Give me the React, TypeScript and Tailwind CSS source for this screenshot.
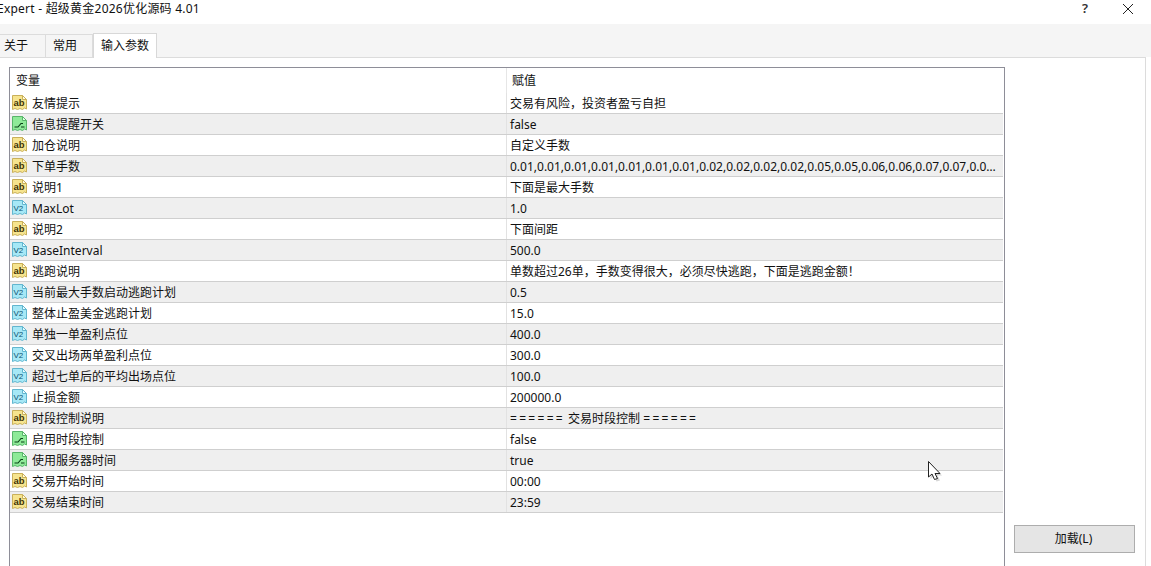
const rows: [string, string, string][] = [
  ["ab", "友情提示", "交易有风险，投资者盈亏自担"],
  ["bool", "信息提醒开关", "false"],
  ["ab", "加仓说明", "自定义手数"],
  ["ab", "下单手数", "0.01,0.01,0.01,0.01,0.01,0.01,0.01,0.02,0.02,0.02,0.02,0.05,0.05,0.06,0.06,0.07,0.07,0.08,0.08,0.09"],
  ["ab", "说明1", "下面是最大手数"],
  ["v", "MaxLot", "1.0"],
  ["ab", "说明2", "下面间距"],
  ["v", "BaseInterval", "500.0"],
  ["ab", "逃跑说明", "单数超过26单，手数变得很大，必须尽快逃跑，下面是逃跑金额！"],
  ["v", "当前最大手数启动逃跑计划", "0.5"],
  ["v", "整体止盈美金逃跑计划", "15.0"],
  ["v", "单独一单盈利点位", "400.0"],
  ["v", "交叉出场两单盈利点位", "300.0"],
  ["v", "超过七单后的平均出场点位", "100.0"],
  ["v", "止损金额", "200000.0"],
  ["ab", "时段控制说明", "====== 交易时段控制 ======"],
  ["bool", "启用时段控制", "false"],
  ["bool", "使用服务器时间", "true"],
  ["ab", "交易开始时间", "00:00"],
  ["ab", "交易结束时间", "23:59"],
];

function TypeIcon({ kind }: { kind: string }) {
  const c =
    kind === "ab"
      ? { fill: "#f6e48e", stroke: "#c9b05a", fold: "#fffbe0", text: "#3f3406" }
      : kind === "v"
        ? { fill: "#a6e8f6", stroke: "#62b6cf", fold: "#e8fcff", text: "#0e5270" }
        : { fill: "#8eea98", stroke: "#58b56a", fold: "#e2ffe5", text: "#083f16" };
  return (
    <svg width="16" height="16" viewBox="0 0 16 16" className="shrink-0">
      <path
        d="M0.500 0.500H10.500L14.500 4.500V14L12.500 13L10.500 14.500L8 13.500L5.500 14.500L3 13.500L0.500 14.500Z"
        fill={c.fill}
        stroke={c.stroke}
      />
      <path d="M10.500 0.500V4.500H14.500Z" fill={c.fold} stroke={c.stroke} />
      {kind === "bool" ? (
        <path d="M2.500 11H6L9 7.500H11M9 11H12.500" fill="none" stroke={c.text} strokeWidth="1.100" />
      ) : (
        <text
          x="1.500"
          y="10.500"
          fontSize={kind === "ab" ? 9.500 : 8}
          fontWeight={kind === "ab" ? 700 : 400}
          fontFamily="'Liberation Sans', sans-serif"
          fill={c.text}
        >
          {kind === "ab" ? "ab" : "V2"}
        </text>
      )}
    </svg>
  );
}

function Value({ text }: { text: string }) {
  if (!text.includes("=")) return <>{text}</>;
  const inner = text.replace(/=/g, "").trim();
  return (
    <>
      <span className="tracking-[2.300px]">======</span> {inner} <span className="tracking-[2.300px]">======</span>
    </>
  );
}

export default function App() {
  return (
    <div
      className="flex h-[566px] w-[1151px] flex-col overflow-hidden bg-white text-[12px] text-[#111]"
      style={{ fontFamily: "'Noto Sans', 'Noto Sans CJK SC', sans-serif" }}
    >
      <div className="flex h-[24px] shrink-0 items-start justify-between">
        <span className="ml-[-3px] mt-[1px] leading-[16px] tracking-[0.230px]">Expert - 超级黄金2026优化源码 4.01</span>
        <div className="flex items-center">
          <span className="mr-[34px] mt-[1px] text-[13px] font-semibold leading-[14px] text-[#333]">?</span>
          <svg width="12" height="12" viewBox="0 0 12 12" className="mr-[17px] mt-[2px]">
            <path d="M1 1L11 11M11 1L1 11" stroke="#222" strokeWidth="1" />
          </svg>
        </div>
      </div>
      <div className="flex h-[33px] shrink-0 items-end bg-[#f5f5f5]">
        <div className="flex h-[23px] w-[46px] items-center border-r border-t border-[#dcdcdc] pl-[4px]">关于</div>
        <div className="flex h-[23px] w-[47px] items-center border-r border-t border-[#dcdcdc] pl-[7px]">常用</div>
        <div className="z-10 mb-[-1px] flex h-[25px] w-[64px] items-center justify-center border-x border-t border-[#d8d8d8] bg-white">
          输入参数
        </div>
      </div>
      <div className="mr-[5px] flex min-h-0 flex-1 border-r border-t border-[#dcdcdc] pr-[10px]">
        <div className="ml-[9px] mt-[9px] flex w-[996px] shrink-0 flex-col border-l border-r border-t border-[#8e8e98] pr-[1px]">
          <div className="flex h-[25px] shrink-0">
            <div className="w-[497px] border-r border-[#e6e6e6] pl-[6px] pt-[5px] leading-[16px]">变量</div>
            <div className="flex-1 pl-[5px] pt-[5px] leading-[16px]">赋值</div>
          </div>
          {rows.map(([kind, name, value], i) => (
            <div
              key={name}
              className={`flex h-[21px] shrink-0 items-center border-b border-[#cfcfcf] ${
                i % 2 ? "bg-[#efefef]" : "bg-white"
              }`}
            >
              <div className="flex h-full w-[497px] shrink-0 items-center gap-[4px] border-r border-[#e2e2e2] pl-[2px]">
                <TypeIcon kind={kind} />
                <span className="mt-[1px] whitespace-nowrap">{name}</span>
              </div>
              <div className="mt-[1px] min-w-0 flex-1 truncate pl-[3px] pr-[5px]">
                <Value text={value} />
              </div>
            </div>
          ))}
        </div>
        <div className="flex flex-1 flex-col items-end justify-end pb-[13px]">
          <button className="flex h-[28px] w-[121px] items-center justify-center border border-[#adadad] bg-[#e5e5e5] pr-[2px]">
            加载(L)
          </button>
        </div>
      </div>
      <svg width="18" height="24" viewBox="0 0 18 24" className="absolute left-[927px] top-[460px]">
        <path d="M3.500 3.500V19L7 16L9.500 21.500L13 20.500L10.500 15.500H15Z" fill="#777" opacity="0.300" />
        <path d="M1.500 1.500V17L5 14L7.500 19.500L10.500 18.500L8 13.500H13Z" fill="#fff" stroke="#222" />
      </svg>
    </div>
  );
}
